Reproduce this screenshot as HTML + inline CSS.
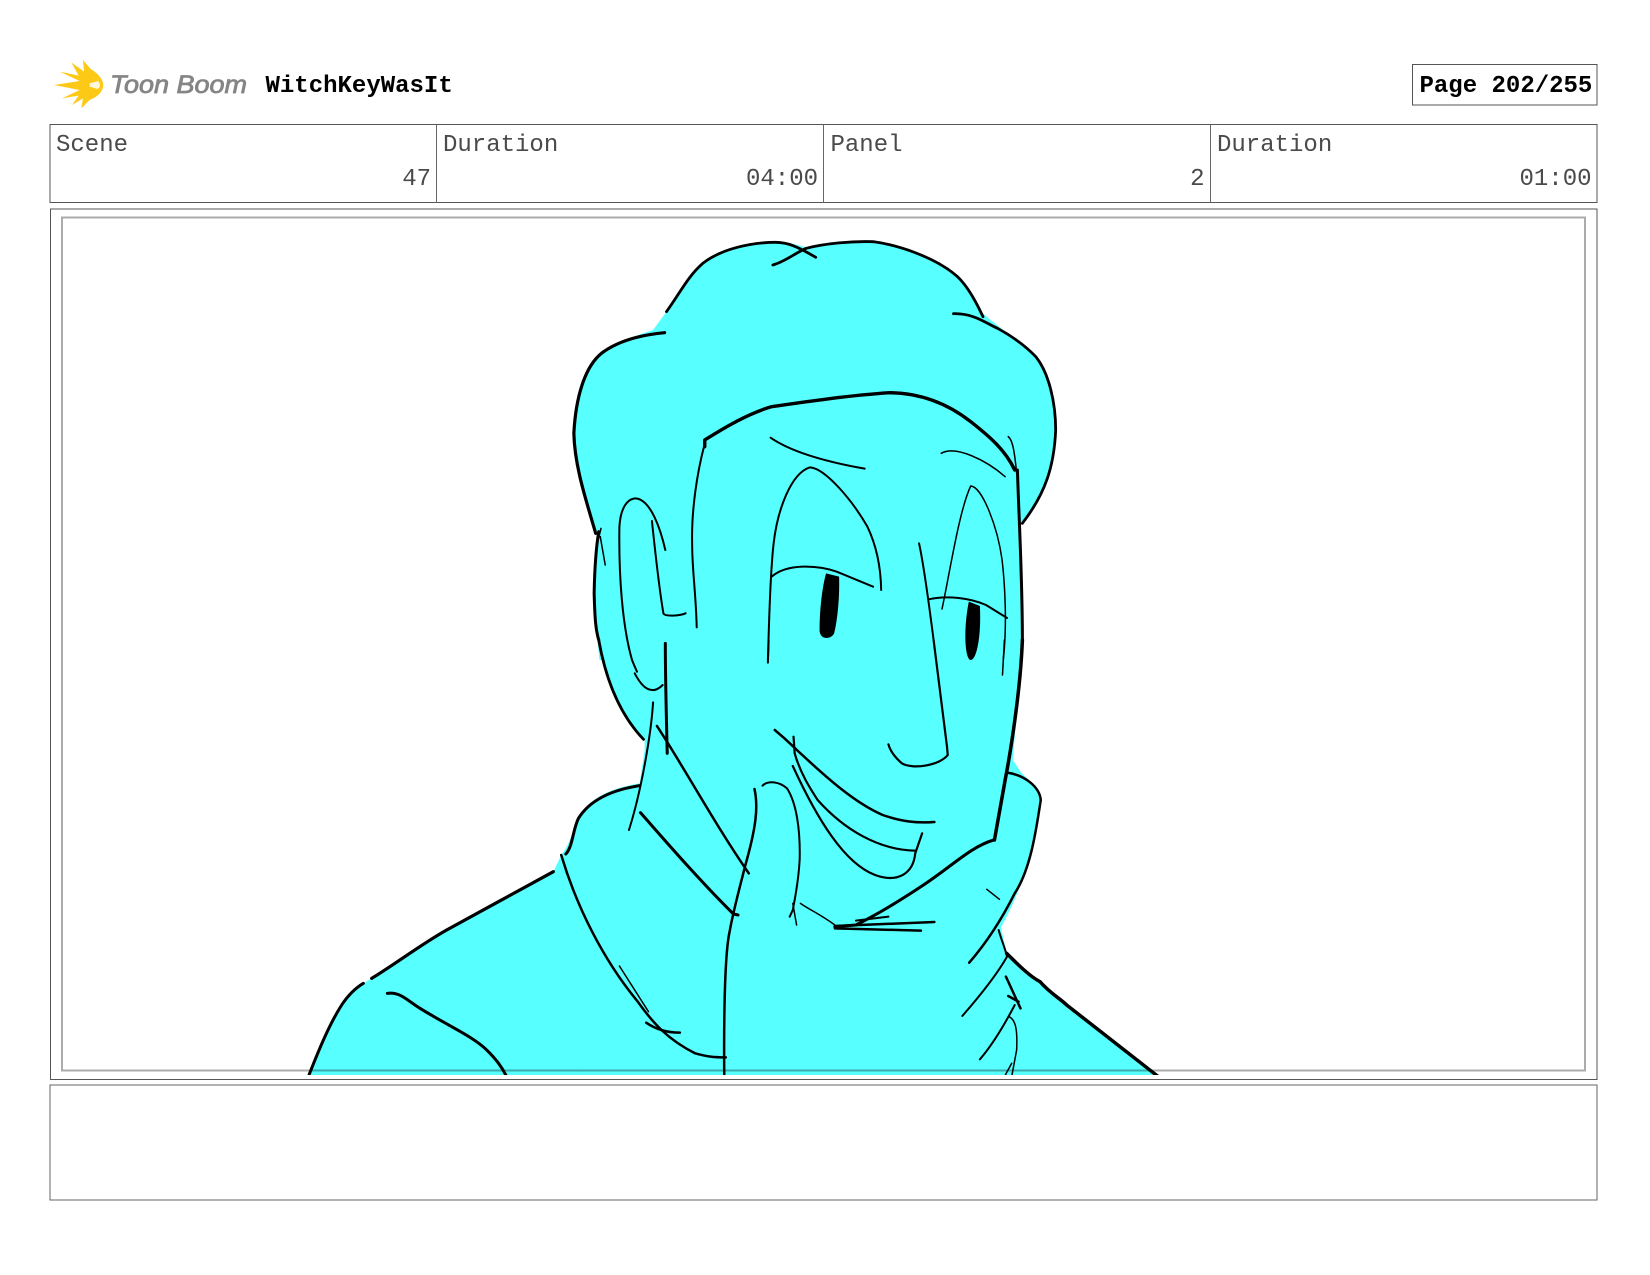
<!DOCTYPE html>
<html>
<head>
<meta charset="utf-8">
<title>WitchKeyWasIt</title>
<style>
html,body{margin:0;padding:0;background:#fff;width:1650px;height:1275px;overflow:hidden}
svg{display:block;position:absolute;left:0;top:0}
text{font-family:"Liberation Mono",monospace;font-size:24px;fill:#4a4a4a}
.b{font-weight:bold;fill:#000}
.ln path{fill:none;stroke:#000;stroke-linecap:round;stroke-linejoin:round;vector-effect:non-scaling-stroke}
.fl path{fill:#57ffff;stroke:none}
</style>
</head>
<body>
<svg width="1650" height="1275" viewBox="0 0 1650 1275" xmlns="http://www.w3.org/2000/svg">
<defs>
<clipPath id="c"><rect x="51" y="209" width="1546" height="866"/></clipPath>
<filter id="s" x="-10%" y="-10%" width="120%" height="120%"><feGaussianBlur stdDeviation="0.5"/></filter>
</defs>

<!-- logo -->
<g transform="translate(48,55) scale(0.33333)" filter="url(#s)">
<path fill="#fcc913" d="M105,15 L128,42 C150,55 165,72 166,90 C165,110 150,125 125,135 L100,160 L105,130 L72,150 L92,122 L42,130 L95,105 L18,90 L95,78 L35,50 L92,62 L70,22 L108,50 Z"/>
<path fill="#fff" opacity=".85" d="M125,85 L150,78 C158,85 158,98 148,102 L125,95 Z"/>
</g>
<text x="110" y="93" textLength="137" lengthAdjust="spacingAndGlyphs" style="font-family:'Liberation Sans',sans-serif;font-style:italic;font-size:25px;fill:#858585;stroke:#858585;stroke-width:.8">Toon Boom</text>
<text class="b" x="265.500" y="92">WitchKeyWasIt</text>

<!-- page box -->
<rect x="1412.5" y="64.5" width="184.5" height="40.5" fill="#fff" stroke="#555" stroke-width="1"/>
<text class="b" x="1419.500" y="92">Page 202/255</text>

<!-- info table -->
<rect x="50" y="124.5" width="1547" height="78" fill="#fff" stroke="#555" stroke-width="1"/>
<path d="M436.5,124.5V202.5M823.5,124.5V202.5M1210.5,124.5V202.5" stroke="#666" stroke-width="1" fill="none"/>
<text x="56" y="151">Scene</text>
<text x="443" y="151">Duration</text>
<text x="830.500" y="151">Panel</text>
<text x="1217" y="151">Duration</text>
<text x="431" y="185" text-anchor="end">47</text>
<text x="818" y="185" text-anchor="end">04:00</text>
<text x="1204.500" y="185" text-anchor="end">2</text>
<text x="1591.500" y="185" text-anchor="end">01:00</text>

<!-- image panel -->
<rect x="50.500" y="209" width="1546.500" height="870.500" fill="#fff" stroke="#555" stroke-width="1"/>
<rect x="50" y="1085" width="1547" height="115" fill="#fff" stroke="#666" stroke-width="1"/>

<g clip-path="url(#c)">
<!-- fills -->
<g class="fl">
<path transform="translate(500,210) scale(.38270,.33333)" d="M400,360 L435,305 C470,250 500,180 545,150 C600,110 680,95 740,97 C770,100 790,110 805,113 C860,100 930,92 980,95 C1050,110 1130,150 1190,190 C1220,220 1240,260 1262,310 C1300,350 1380,410 1410,450 C1440,500 1455,600 1452,660 C1445,780 1420,860 1372,935 L1358,950 L1365,1350 L260,1350 C245,1200 245,1060 258,985 L250,970 C215,860 190,760 193,660 C195,560 215,480 260,430 C300,400 360,375 400,360 Z"/>
<path transform="translate(500,640) scale(.38270,.33333)" d="M258,0 C270,100 310,220 378,300 L378,330 L365,430 C290,445 240,470 205,530 C190,570 185,610 160,645 L140,695 L0,790 L0,1310 L1568,1310 L1568,1190 L1325,945 L1305,870 C1350,780 1395,650 1413,480 C1400,430 1370,410 1360,395 L1340,360 L1365,0 Z"/>
<path transform="translate(280,840) scale(.33333)" d="M85,705 C130,600 170,510 205,465 L250,430 L275,415 C350,365 450,300 540,250 L820,95 L845,45 L900,0 L900,705 Z"/>
<path transform="translate(900,840) scale(.33333)" d="M320,340 C360,385 420,420 470,470 L770,705 L0,705 L0,200 L300,250 Z"/>
</g>

<!-- upper strokes -->
<g class="ln" transform="translate(500,210) scale(.38270,.33333)">
<path stroke-width="2.800" d="M435,305 C470,250 490,200 530,160 C580,115 660,97 720,97 C750,97 775,108 825,142"/>
<path stroke-width="2.800" d="M713,165 C745,155 770,130 800,115 C850,100 920,93 975,95 C1040,105 1130,140 1185,190 C1215,215 1240,265 1262,320"/>
<path stroke-width="2.800" d="M1185,311 C1240,310 1270,340 1300,355 C1340,380 1375,410 1400,440 C1435,490 1452,580 1452,660 C1448,770 1425,850 1365,940"/>
<path stroke-width="3.200" d="M430,368 C365,375 305,395 265,430 C222,470 198,560 193,670 C195,770 225,870 250,970"/>
<path stroke-width="3.400" d="M535,710 L535,690 C590,650 650,610 710,590 C800,575 920,555 1020,548 C1110,550 1180,590 1230,635 C1280,680 1320,720 1345,780"/>
<path stroke-width="1.500" d="M1328,680 C1340,690 1345,730 1350,790"/>
<path stroke-width="3" d="M1352,780 C1355,900 1365,1100 1365,1290"/>
<path stroke-width="2" d="M533,710 C515,790 500,900 502,1000 C502,1080 512,1150 514,1252"/>
<path stroke-width="2" d="M707,683 C760,725 850,755 953,776"/>
<path stroke-width="1.500" d="M1153,730 C1190,705 1270,750 1320,800"/>
<path stroke-width="2" d="M700,1350 C703,1250 705,1100 715,1000 C725,900 760,790 810,772 C850,775 920,870 960,950 C985,1010 995,1070 996,1140"/>
<path stroke-width="2" d="M710,1100 C750,1060 830,1065 880,1085 L975,1130"/>
<path style="fill:#000;stroke:none" d="M852,1090 L886,1100 C888,1170 880,1240 873,1270 C865,1290 835,1290 835,1260 C835,1210 840,1140 852,1090 Z"/>
<path stroke-width="1.500" d="M1155,1197 C1175,1090 1200,900 1230,828 C1260,830 1300,950 1312,1050 C1320,1130 1325,1250 1315,1350"/>
<path stroke-width="2" d="M1120,1168 C1170,1155 1230,1165 1270,1185 L1325,1224"/>
<path style="fill:#000;stroke:none" d="M1225,1175 L1254,1188 C1258,1280 1245,1350 1230,1350 C1215,1350 1210,1260 1225,1175 Z"/>
<path stroke-width="2" d="M1095,1000 C1110,1080 1125,1220 1133,1290"/>
<path stroke-width="2" d="M345,1350 C320,1250 310,1100 312,950 C315,890 335,865 355,865 C395,870 420,960 432,1020"/>
<path stroke-width="2" d="M397,933 C405,1020 415,1130 427,1210 C430,1220 470,1218 485,1210"/>
<path stroke-width="3" d="M258,965 C250,1020 247,1090 246,1150 C248,1230 250,1260 258,1290"/>
<path stroke-width="1.500" d="M264,955 L252,1010"/>
<path stroke-width="1.500" d="M262,980 L275,1065"/>
</g>

<!-- lower strokes -->
<g class="ln" transform="translate(500,640) scale(.38270,.33333)">
<path stroke-width="2.800" d="M258,0 C275,110 310,220 375,298"/>
<path stroke-width="2" d="M345,60 C350,75 354,85 358,95"/>
<path stroke-width="2" d="M352,100 C370,140 395,170 425,135"/>
<path stroke-width="3" d="M432,10 C432,100 435,250 437,340"/>
<path stroke-width="2" d="M400,187 C395,280 370,450 337,570"/>
<path stroke-width="3" d="M365,437 C290,450 235,480 205,535 C190,570 190,620 172,642"/>
<path stroke-width="2.500" d="M410,258 C480,380 560,550 650,700"/>
<path stroke-width="3" d="M367,518 C430,600 520,720 610,822 L622,825"/>
<path stroke-width="2.500" d="M160,645 C200,800 270,960 360,1085 C400,1150 440,1200 510,1240 C540,1250 560,1252 590,1252"/>
<path stroke-width="1.500" d="M312,978 L388,1115"/>
<path stroke-width="2.500" d="M382,1148 C410,1170 440,1178 470,1178"/>
<path stroke-width="2.500" d="M665,447 C675,500 670,560 640,680 C625,750 610,810 600,875 C585,950 585,1200 586,1310"/>
<path stroke-width="2" d="M686,437 C700,420 730,425 750,445 C775,490 785,570 783,660 C780,720 772,770 765,810 L757,830"/>
<path stroke-width="1.500" d="M765,790 L775,855"/>
<path stroke-width="1.500" d="M785,790 C810,810 840,825 875,855"/>
<path stroke-width="2.500" d="M718,270 C760,310 770,325 790,345 C860,420 930,490 1000,525 C1050,545 1090,550 1135,546"/>
<path stroke-width="2.200" d="M767,290 L770,340 C785,400 810,445 830,480 C900,570 990,630 1085,632"/>
<path stroke-width="2.200" d="M765,378 C830,540 900,670 980,705 C1040,730 1080,700 1085,640 L1103,580"/>
<path stroke-width="2.200" d="M1133,0 L1168,320 L1170,345 C1150,375 1080,390 1050,370 C1035,355 1020,335 1015,313"/>
<path stroke-width="3.500" d="M1365,0 C1360,150 1335,330 1320,420 L1292,600"/>
<path stroke-width="3" d="M1290,600 C1230,620 1180,680 1100,740 C1060,770 1000,815 930,855 L875,860"/>
<path stroke-width="2.500" d="M875,858 L1135,846"/>
<path stroke-width="2.500" d="M875,865 L1100,872"/>
<path stroke-width="2" d="M930,842 L1015,830"/>
<path stroke-width="2.500" d="M1325,398 C1370,405 1410,440 1413,480 C1400,580 1385,690 1345,760 C1310,840 1270,910 1226,968"/>
<path stroke-width="1.500" d="M1272,748 L1305,778"/>
<path stroke-width="2" d="M1303,870 C1310,900 1320,925 1325,950 C1300,1000 1260,1060 1208,1128"/>
<path stroke-width="2.500" d="M1322,1010 L1360,1105"/>
<path stroke-width="2.500" d="M1328,1068 L1355,1085"/>
<path stroke-width="2" d="M1345,1095 C1320,1150 1290,1210 1254,1258"/>
<path stroke-width="1.500" d="M1330,1130 C1350,1140 1352,1180 1350,1230 L1337,1310"/>
<path stroke-width="1.500" d="M1337,1270 L1318,1310"/>
<path stroke-width="1.500" d="M1318,0 L1313,105"/>
<path stroke-width="2" d="M702,0 L700,68"/>
</g>

<!-- shoulders -->
<g class="ln" transform="translate(280,840) scale(.33333)">
<path stroke-width="3" d="M85,710 C120,620 150,550 185,495 C205,465 225,445 250,430"/>
<path stroke-width="3.200" d="M275,415 C350,370 420,315 500,270 C600,215 720,150 820,95"/>
<path stroke-width="3" d="M322,460 C360,455 380,480 420,505 C500,555 580,590 620,630 C650,660 665,680 680,710"/>
</g>
<g class="ln" transform="translate(900,840) scale(.33333)">
<path stroke-width="3.500" d="M320,340 C350,370 390,410 420,425 C450,460 480,475 500,495 L775,710"/>
</g>
</g>

<!-- inner frame -->
<rect x="62" y="217.500" width="1523" height="853" fill="none" stroke="#000" stroke-opacity=".33" stroke-width="2"/>
</svg>
</body>
</html>
